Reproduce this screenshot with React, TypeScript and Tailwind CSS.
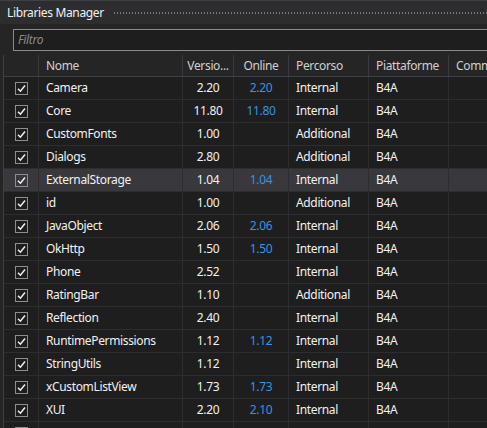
import React from 'react'

const libs = [
  { name: 'Camera', version: '2.20', online: '2.20', path: 'Internal' },
  { name: 'Core', version: '11.80', online: '11.80', path: 'Internal' },
  { name: 'CustomFonts', version: '1.00', online: '', path: 'Additional' },
  { name: 'Dialogs', version: '2.80', online: '', path: 'Additional' },
  { name: 'ExternalStorage', version: '1.04', online: '1.04', path: 'Internal', selected: true },
  { name: 'id', version: '1.00', online: '', path: 'Additional' },
  { name: 'JavaObject', version: '2.06', online: '2.06', path: 'Internal' },
  { name: 'OkHttp', version: '1.50', online: '1.50', path: 'Internal' },
  { name: 'Phone', version: '2.52', online: '', path: 'Internal' },
  { name: 'RatingBar', version: '1.10', online: '', path: 'Additional' },
  { name: 'Reflection', version: '2.40', online: '', path: 'Internal' },
  { name: 'RuntimePermissions', version: '1.12', online: '1.12', path: 'Internal' },
  { name: 'StringUtils', version: '1.12', online: '', path: 'Internal' },
  { name: 'xCustomListView', version: '1.73', online: '1.73', path: 'Internal' },
  { name: 'XUI', version: '2.20', online: '2.10', path: 'Internal' },
  { name: '', version: '', online: '', path: '' },
]

const cols = 'grid grid-cols-[35px_144px_51px_55px_80px_80px_1fr]'

function Check() {
  return (
    <div className="w-[13px] h-[13px] border border-[#8e8e8e] flex items-center justify-center">
      <svg width="9" height="9" viewBox="0 0 9 9" fill="none">
        <path d="M1 4.8 L3.4 7.2 L8 1.5" stroke="#f1f1f1" strokeWidth="1.5" />
      </svg>
    </div>
  )
}

export default function App() {
  return (
    <div
      className="w-[487px] h-[428px] overflow-hidden bg-[#252526] text-[12px] tracking-[-0.35px] text-[#f1f1f1]"
      style={{ fontFamily: '"Noto Sans", "Open Sans", sans-serif' }}
    >
      {/* title bar */}
      <div className="h-[24px] bg-[#2d2d30] border-t border-[#3f3f46] flex items-center pl-[7px]">
        <span className="leading-none">Libraries Manager</span>
        <div className="flex-1 ml-[9px] h-[4px] bg-[radial-gradient(circle,#777777_0.8px,transparent_1px)] bg-[length:3px_4px]" />
      </div>

      {/* filter */}
      <div className="h-[31px] pt-[5px] pl-[13px]">
        <div className="h-[22px] border border-[#8a8a8a] border-r-0 bg-[#1e1e1e] flex items-center pl-[4px]">
          <span className="italic text-[#8a8a8a]">Filtro</span>
        </div>
      </div>

      {/* table */}
      <div className="ml-[3px] border-l border-[#3f3f46] bg-[#1e1e1e]">
        <div className={`${cols} h-[22px] bg-[#252526] border-b border-[#3f3f46] text-[#d0d0d0]`}>
          <div className="border-r border-[#3a3a3e]" />
          <div className="border-r border-[#3a3a3e] pl-[7px] flex items-center">Nome</div>
          <div className="border-r border-[#3a3a3e] flex items-center justify-center">Versio...</div>
          <div className="border-r border-[#3a3a3e] flex items-center justify-center">Online</div>
          <div className="border-r border-[#3a3a3e] pl-[7px] flex items-center">Percorso</div>
          <div className="border-r border-[#3a3a3e] pl-[7px] flex items-center">Piattaforme</div>
          <div className="pl-[7px] flex items-center whitespace-nowrap overflow-hidden">Commenti</div>
        </div>
        {libs.map((lib, i) => (
          <div
            key={i}
            className={`${cols} h-[23px] border-b border-[#2d2d30] ${lib.selected ? 'bg-[#38383d]' : ''}`}
          >
            <div className="border-r border-[#2d2d30] flex items-center justify-center pl-[1px]">
              <Check />
            </div>
            <div className="border-r border-[#2d2d30] pl-[7px] flex items-center">{lib.name}</div>
            <div className="border-r border-[#2d2d30] flex items-center justify-center">{lib.version}</div>
            <div className="border-r border-[#2d2d30] flex items-center justify-center text-[#3794e0]">{lib.online}</div>
            <div className="border-r border-[#2d2d30] pl-[7px] flex items-center">{lib.path}</div>
            <div className="border-r border-[#2d2d30] pl-[7px] flex items-center">{lib.name ? 'B4A' : ''}</div>
            <div />
          </div>
        ))}
      </div>
    </div>
  )
}
